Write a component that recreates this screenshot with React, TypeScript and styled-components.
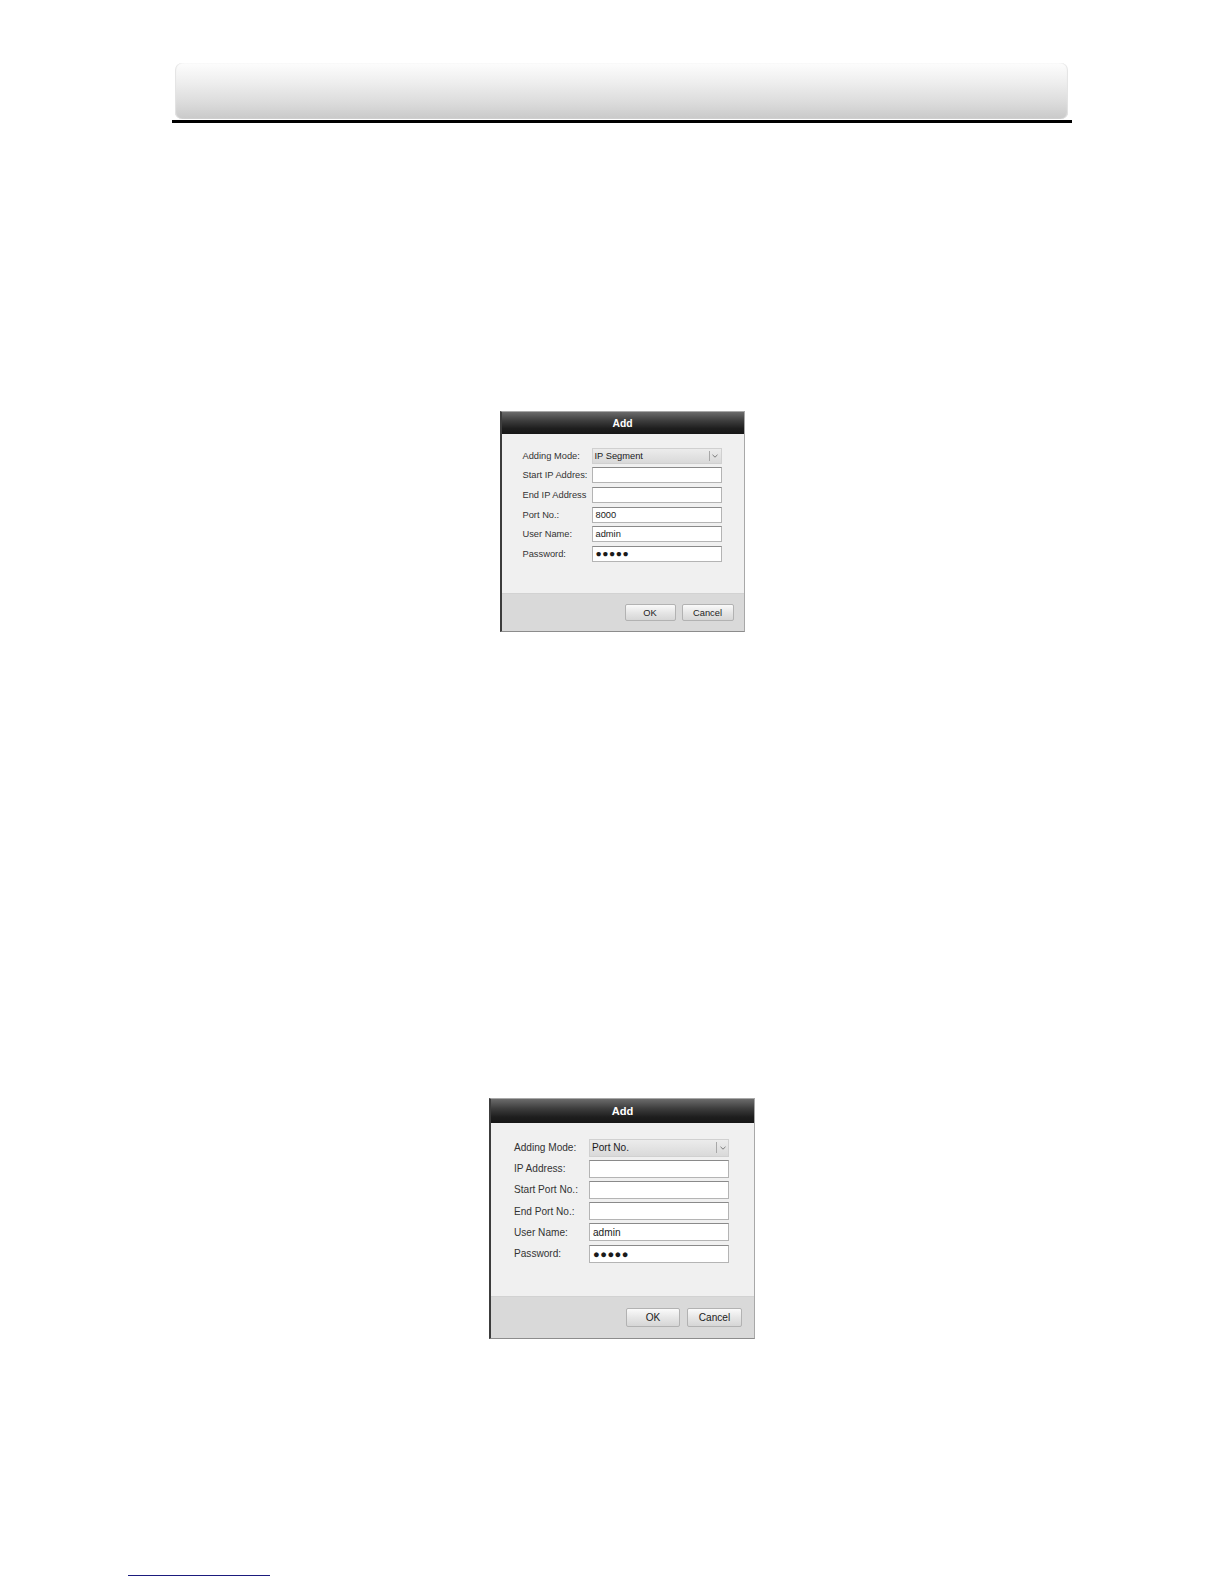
import React, { FC } from 'react';
import styled, { createGlobalStyle } from 'styled-components';

const GlobalStyle = createGlobalStyle`
    html, body {
        margin: 0;
        overflow: hidden;
    }

    body {
        background: #ffffff;
        font-family: "Liberation Sans", Arial, sans-serif;
    }
`;

interface DialogSize {
    width: number;
    height: number;
    titleHeight: number;
    footerHeight: number;
    padTop: number;
    padLeft: number;
    labelWidth: number;
    inputWidth: number;
    inputHeight: number;
    rowHeight: number;
    fontSize: number;
    buttonWidth: number;
    buttonHeight: number;
    padRight: number;
    buttonGap: number;
}

interface Field {
    label: string;
    value?: string;
    kind?: 'select' | 'password' | 'text';
}

const Page = styled.div`
    width: 900px;
    margin-left: 172px;
    padding-top: 63px;
`;

const HeaderBar = styled.div`
    height: 56px;
    margin: 0 4px 0 3px;
    border-radius: 7px;
    background: linear-gradient(#fdfdfd 0%, #eeeeee 35%, #dcdcdc 70%, #c9c9c9 100%);
    box-shadow: inset 1px 0 1px #e4e4e4, inset -1px 0 1px #e4e4e4;
`;

const Rule = styled.div`
    height: 3px;
    margin-top: 1px;
    background: #000000;
`;

const Frame = styled.div<{ $w: number; $h: number; $top: number }>`
    box-sizing: border-box;
    width: ${({ $w }) => $w}px;
    height: ${({ $h }) => $h}px;
    margin: ${({ $top }) => $top}px auto 0;
    display: flex;
    flex-direction: column;
    border: 1px solid #a8a8a8;
    border-left: 2px solid #3c3c3c;
    border-bottom-color: #8c8c8c;
    background: #efefef;
`;

const TitleBar = styled.div<{ $h: number; $fs: number }>`
    height: ${({ $h }) => $h}px;
    display: flex;
    align-items: center;
    justify-content: center;
    background: linear-gradient(#6b6b6b 0%, #3d3d3d 40%, #1e1e1e 75%, #161616 100%);
    color: #ffffff;
    font-weight: bold;
    font-size: ${({ $fs }) => $fs}px;
`;

const Body = styled.div<{ $pt: number; $pl: number }>`
    flex: 1;
    padding: ${({ $pt }) => $pt}px 0 0 ${({ $pl }) => $pl}px;
    background: #f0f0f0;
`;

const Row = styled.div<{ $h: number; $lw: number; $iw: number }>`
    height: ${({ $h }) => $h}px;
    display: grid;
    grid-template-columns: ${({ $lw }) => $lw}px ${({ $iw }) => $iw}px;
    align-items: center;
`;

const Label = styled.span<{ $fs: number }>`
    font-size: ${({ $fs }) => $fs}px;
    color: #333333;
    white-space: nowrap;
`;

const Input = styled.div<{ $h: number; $fs: number }>`
    box-sizing: border-box;
    height: ${({ $h }) => $h}px;
    display: flex;
    align-items: center;
    padding-left: 3px;
    background: #ffffff;
    border: 1px solid #b4b4b4;
    border-top-color: #8a8a8a;
    font-size: ${({ $fs }) => $fs}px;
    color: #1a1a1a;
`;

const Dots = styled.span<{ $fs: number }>`
    font-size: ${({ $fs }) => $fs - 3}px;
    letter-spacing: 0.5px;
`;

const Select = styled.div<{ $h: number; $fs: number }>`
    box-sizing: border-box;
    height: ${({ $h }) => $h}px;
    display: flex;
    align-items: center;
    background: linear-gradient(#ececec, #d9d9d9);
    border: 1px solid #d0d0d0;
    font-size: ${({ $fs }) => $fs}px;
    color: #1a1a1a;
`;

const SelectText = styled.span`
    flex: 1;
    padding-left: 2px;
`;

const Chevron = styled.span`
    width: 11px;
    height: 70%;
    display: flex;
    align-items: center;
    justify-content: center;
    border-left: 1px solid #a8a8a8;
`;

const Footer = styled.div<{ $h: number; $pr: number; $gap: number }>`
    height: ${({ $h }) => $h}px;
    display: flex;
    align-items: center;
    justify-content: flex-end;
    gap: ${({ $gap }) => $gap}px;
    padding-right: ${({ $pr }) => $pr}px;
    background: #d9d9d9;
    border-top: 1px solid #d2d2d2;
`;

const Button = styled.div<{ $w: number; $h: number; $fs: number }>`
    box-sizing: border-box;
    width: ${({ $w }) => $w}px;
    height: ${({ $h }) => $h}px;
    display: flex;
    align-items: center;
    justify-content: center;
    background: linear-gradient(#fafafa, #e6e6e6 50%, #d6d6d6);
    border: 1px solid #b2b2b2;
    border-radius: 2px;
    font-size: ${({ $fs }) => $fs}px;
    color: #222222;
`;

const FooterLink = styled.div`
    width: 142px;
    height: 1px;
    margin: 236px 0 0 -44px;
    background: #1b1b7d;
`;

const AddDialog: FC<{ size: DialogSize; top: number; fields: Field[] }> = ({ size, top, fields }) => (
    <Frame $w={size.width} $h={size.height} $top={top}>
        <TitleBar $h={size.titleHeight} $fs={size.fontSize + 1}>
            Add
        </TitleBar>
        <Body $pt={size.padTop} $pl={size.padLeft}>
            {fields.map((f) => (
                <Row key={f.label} $h={size.rowHeight} $lw={size.labelWidth} $iw={size.inputWidth}>
                    <Label $fs={size.fontSize}>{f.label}</Label>
                    {f.kind === 'select' ? (
                        <Select $h={size.inputHeight} $fs={size.fontSize}>
                            <SelectText>{f.value}</SelectText>
                            <Chevron>
                                <svg width="6" height="4" viewBox="0 0 6 4">
                                    <path d="M0.5 0.8 L3 3.2 L5.5 0.8" fill="none" stroke="#7a7a7a" strokeWidth="1" />
                                </svg>
                            </Chevron>
                        </Select>
                    ) : (
                        <Input $h={size.inputHeight} $fs={size.fontSize}>
                            {f.kind === 'password' ? <Dots $fs={size.fontSize + 4}>●●●●●</Dots> : f.value}
                        </Input>
                    )}
                </Row>
            ))}
        </Body>
        <Footer $h={size.footerHeight} $pr={size.padRight} $gap={size.buttonGap}>
            <Button $w={size.buttonWidth} $h={size.buttonHeight} $fs={size.fontSize}>
                OK
            </Button>
            <Button $w={size.buttonWidth + 1} $h={size.buttonHeight} $fs={size.fontSize}>
                Cancel
            </Button>
        </Footer>
    </Frame>
);

const smallSize: DialogSize = {
    width: 245,
    height: 221,
    titleHeight: 22,
    footerHeight: 37,
    padTop: 12,
    padLeft: 21,
    labelWidth: 69,
    inputWidth: 130,
    inputHeight: 16,
    rowHeight: 19.6,
    fontSize: 9.3,
    buttonWidth: 51,
    buttonHeight: 17,
    padRight: 10,
    buttonGap: 6,
};

const largeSize: DialogSize = {
    width: 266,
    height: 241,
    titleHeight: 24,
    footerHeight: 41,
    padTop: 14,
    padLeft: 23,
    labelWidth: 75,
    inputWidth: 140,
    inputHeight: 18,
    rowHeight: 21.2,
    fontSize: 10.1,
    buttonWidth: 54,
    buttonHeight: 19,
    padRight: 12,
    buttonGap: 7,
};

const segmentFields: Field[] = [
    { label: 'Adding Mode:', value: 'IP Segment', kind: 'select' },
    { label: 'Start IP Addres:' },
    { label: 'End IP Address' },
    { label: 'Port No.:', value: '8000' },
    { label: 'User Name:', value: 'admin' },
    { label: 'Password:', kind: 'password' },
];

const portFields: Field[] = [
    { label: 'Adding Mode:', value: 'Port No.', kind: 'select' },
    { label: 'IP Address:' },
    { label: 'Start Port No.:' },
    { label: 'End Port No.:' },
    { label: 'User Name:', value: 'admin' },
    { label: 'Password:', kind: 'password' },
];

const App: FC = () => (
    <>
        <GlobalStyle />
        <Page>
            <HeaderBar />
            <Rule />
            <AddDialog size={smallSize} top={288} fields={segmentFields} />
            <AddDialog size={largeSize} top={466} fields={portFields} />
            <FooterLink />
        </Page>
    </>
);

export default App;
